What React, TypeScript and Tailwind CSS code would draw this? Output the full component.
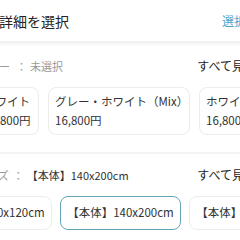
import React from "react";

const font = { fontFamily: '"Noto Sans CJK JP", "Noto Sans", sans-serif' };

export default function App() {
  return (
    <div className="w-[240px] h-[240px] overflow-hidden bg-white" style={font}>
      {/* header */}
      <div className="h-[41px] flex items-center justify-between mr-[-30px]">
        <div className="ml-[-1px] text-[14px] text-[#222] whitespace-nowrap leading-none">詳細を選択</div>
        <div className="text-[12px] text-[#4ba3cc] whitespace-nowrap leading-none">選択する</div>
      </div>
      <div className="h-[6px] bg-gradient-to-b from-[#eeeeee] to-white" />

      {/* color label */}
      <div className="mt-[9px] h-[20px] flex items-center justify-between mr-[-16px]">
        <div className="ml-[-23px] text-[11px] text-[#9a9a9a] whitespace-nowrap leading-none flex items-center">
          <span>カラー</span>
          <span className="ml-[6px] mr-[3px]">：</span>
          <span>未選択</span>
        </div>
        <div className="text-[12px] text-[#222] whitespace-nowrap leading-none">すべて見る</div>
      </div>

      {/* color cards */}
      <div className="mt-[11px] flex gap-[9px] ml-[-23px]">
        <div className="shrink-0 w-[62px] h-[48px] rounded-[8px] border border-[#ececec] pl-[6px] flex flex-col justify-center gap-[8px] text-[11.5px] text-[#333] leading-none whitespace-nowrap">
          <div>ホワイト</div>
          <div>16,800円</div>
        </div>
        <div className="shrink-0 w-[142px] h-[48px] rounded-[8px] border border-[#ececec] pl-[6px] flex flex-col justify-center gap-[8px] text-[11.5px] text-[#333] leading-none whitespace-nowrap">
          <div>グレー・ホワイト（Mix）</div>
          <div>16,800円</div>
        </div>
        <div className="shrink-0 w-[80px] h-[48px] rounded-[8px] border border-[#ececec] pl-[6px] flex flex-col justify-center gap-[8px] text-[11.5px] text-[#333] leading-none whitespace-nowrap">
          <div>ホワイト</div>
          <div>16,800円</div>
        </div>
      </div>

      {/* separator */}
      <div className="mt-[17px] h-[2px] bg-[#f3f3f3]" />

      {/* size label */}
      <div className="mt-[11px] h-[20px] flex items-center justify-between mr-[-16px]">
        <div className="ml-[-24px] text-[11px] whitespace-nowrap leading-none flex items-center">
          <span className="text-[#9a9a9a]">サイズ</span>
          <span className="text-[#9a9a9a] ml-[4px] mr-[3px]">：</span>
          <span className="text-[#333]">【本体】140x200cm</span>
        </div>
        <div className="text-[12px] text-[#222] whitespace-nowrap leading-none">すべて見る</div>
      </div>

      {/* size chips */}
      <div className="mt-[11px] flex gap-[8px] ml-[-69px]">
        <div className="shrink-0 w-[121px] h-[34px] rounded-[8px] border border-[#ececec] flex items-center justify-center text-[11.5px] text-[#333] leading-none whitespace-nowrap">
          【本体】100x120cm
        </div>
        <div className="shrink-0 w-[121px] h-[34px] rounded-[8px] border-[1.5px] border-[#65a3b8] flex items-center justify-center text-[11.5px] text-[#333] leading-none whitespace-nowrap">
          【本体】140x200cm
        </div>
        <div className="shrink-0 w-[121px] h-[34px] rounded-[8px] border border-[#ececec] flex items-center justify-center text-[11.5px] text-[#333] leading-none whitespace-nowrap">
          【本体】160x200cm
        </div>
      </div>
    </div>
  );
}
